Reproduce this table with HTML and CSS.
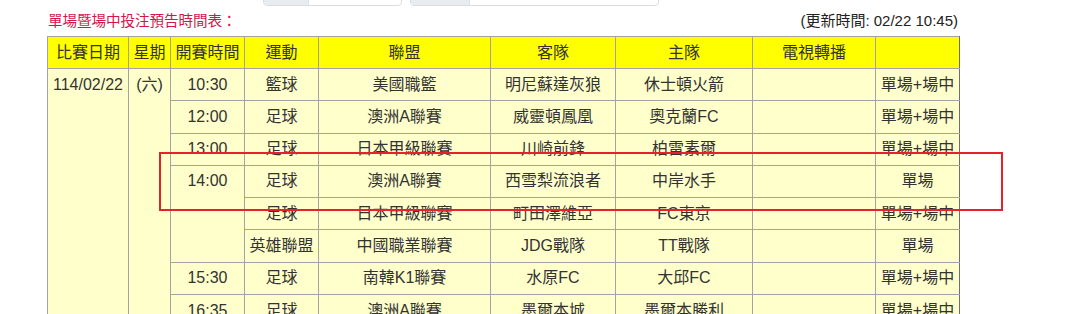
FILE: index.html
```html
<!DOCTYPE html>
<html lang="zh-Hant">
<head>
<meta charset="utf-8">
<title>單場暨場中投注預告時間表</title>
<link rel="stylesheet" href="styles.css">
</head>
<body>
<div class="page">
  <div class="filters">
    <div class="input-group narrow"><span class="addon"></span><span class="field"></span></div>
    <div class="input-group wide"><span class="addon"></span><span class="field"></span></div>
  </div>
  <div class="caption-row">
    <div class="title">單場暨場中投注預告時間表：</div>
    <div class="updated">(更新時間: 02/22 10:45)</div>
  </div>
  <table class="schedule">
    <colgroup>
      <col class="c-date"><col class="c-week"><col class="c-time"><col class="c-sport"><col class="c-league"><col class="c-away"><col class="c-home"><col class="c-tv"><col class="c-type">
    </colgroup>
    <thead>
      <tr><th>比賽日期</th><th>星期</th><th>開賽時間</th><th>運動</th><th>聯盟</th><th>客隊</th><th>主隊</th><th>電視轉播</th><th></th></tr>
    </thead>
    <tbody>
      <tr><td rowspan="8">114/02/22</td><td rowspan="8">(六)</td><td>10:30</td><td>籃球</td><td>美國職籃</td><td>明尼蘇達灰狼</td><td>休士頓火箭</td><td></td><td>單場+場中</td></tr>
      <tr><td>12:00</td><td>足球</td><td>澳洲A聯賽</td><td>威靈頓鳳凰</td><td>奧克蘭FC</td><td></td><td>單場+場中</td></tr>
      <tr><td>13:00</td><td>足球</td><td>日本甲級聯賽</td><td>川崎前鋒</td><td>柏雷素爾</td><td></td><td>單場+場中</td></tr>
      <tr><td rowspan="3">14:00</td><td>足球</td><td>澳洲A聯賽</td><td>西雪梨流浪者</td><td>中岸水手</td><td></td><td>單場</td></tr>
      <tr><td>足球</td><td>日本甲級聯賽</td><td>町田澤維亞</td><td>FC東京</td><td></td><td>單場+場中</td></tr>
      <tr><td>英雄聯盟</td><td>中國職業聯賽</td><td>JDG戰隊</td><td>TT戰隊</td><td></td><td>單場</td></tr>
      <tr><td>15:30</td><td>足球</td><td>南韓K1聯賽</td><td>水原FC</td><td>大邱FC</td><td></td><td>單場+場中</td></tr>
      <tr><td>16:35</td><td>足球</td><td>澳洲A聯賽</td><td>墨爾本城</td><td>墨爾本勝利</td><td></td><td>單場+場中</td></tr>
    </tbody>
  </table>
</div>
<div class="highlight"></div>
</body>
</html>
```
FILE: styles.css
```css
html, body {
  margin: 0;
  padding: 0;
  background: #ffffff;
  overflow: hidden;
}
body {
  position: relative;
  height: 314px;
  font-family: "Liberation Sans", "Noto Sans CJK TC", sans-serif;
  color: #333333;
}
.page {
  margin-left: 47px;
  width: 912px;
}
.filters {
  display: flex;
  gap: 8px;
  padding-left: 216px;
  margin-top: -32px;
  height: 38px;
}
.input-group {
  display: flex;
  height: 38px;
  box-sizing: border-box;
  border: 1px solid #d9dde2;
  border-radius: 4px;
  overflow: hidden;
  background: #ffffff;
}
.input-group.narrow { width: 139px; }
.input-group.wide { width: 249px; }
.input-group .addon {
  background: #e9ecef;
  border-right: 1px solid #dde1e5;
}
.input-group.narrow .addon { width: 44px; }
.input-group.wide .addon { width: 58px; }
.input-group .field { flex: 1; }
.caption-row {
  display: flex;
  justify-content: space-between;
  align-items: baseline;
  margin-top: 4px;
  height: 26px;
  padding-left: 1px;
}
.title {
  font-size: 14.6px;
  line-height: 22px;
  color: #d3164a;
  letter-spacing: -0.1px;
}
.updated {
  font-size: 15px;
  line-height: 22px;
  color: #222222;
  padding-right: 1px;
}
.schedule {
  border-collapse: collapse;
  table-layout: fixed;
  width: 912px;
  border: 1px solid #7a7a7a;
  font-size: 16px;
}
.c-date { width: 81px; }
.c-week { width: 42px; }
.c-time { width: 74px; }
.c-sport { width: 74px; }
.c-league { width: 172px; }
.c-away { width: 125px; }
.c-home { width: 137px; }
.c-tv { width: 123px; }
.c-type { width: 84px; }
.schedule th,
.schedule td {
  border: 1px solid #a3a3a3;
  padding: 4.65px 0;
  line-height: 22px;
  text-align: center;
  vertical-align: top;
  white-space: nowrap;
  font-weight: normal;
  color: #333333;
}
.schedule th {
  background: #ffff00;
  padding: 4.5px 0;
}
.schedule td {
  background: #ffffcc;
}
.schedule tr > :last-child {
  border-right-color: #6e6e6e;
}
.highlight {
  position: absolute;
  left: 159px;
  top: 152px;
  width: 844px;
  height: 59px;
  box-sizing: border-box;
  border: 2px solid #e8202c;
  pointer-events: none;
}
```
